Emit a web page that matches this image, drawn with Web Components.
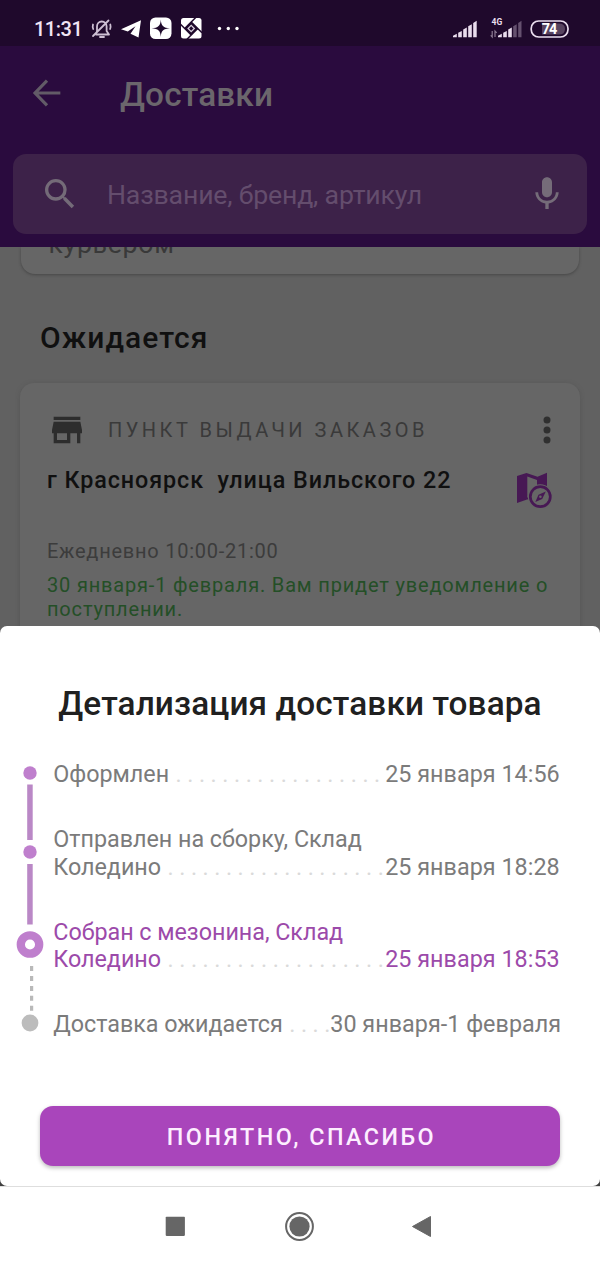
<!DOCTYPE html>
<html lang="ru">
<head>
<meta charset="utf-8">
<title>Доставки</title>
<style>
html,body{margin:0;padding:0}
body{width:600px;height:1265px;overflow:hidden;background:#616161;font-family:Roboto,"Noto Sans",sans-serif;color:#0c0c0c}
</style>
</head>
<body>
<app-screen></app-screen>
<script>
const define = (name, html) => {
  const tpl = document.createElement('template');
  tpl.innerHTML = html;
  customElements.define(name, class extends HTMLElement {
    constructor() {
      super();
      this.attachShadow({ mode: 'open' }).appendChild(tpl.content.cloneNode(true));
    }
  });
};

define('status-bar', `<style>
:host{display:flex;box-sizing:border-box;height:46px;background:#1f092c;color:#f0e4f4;padding:0 0 0 34px}
.time{width:57px;font:500 20px/58px Roboto,sans-serif;letter-spacing:-.5px}
svg{display:block;height:46px}
</style>
<span class="time">11:31</span>
<svg width="509" viewBox="91 0 509 46">
  <g fill="none" stroke="#cdbfd3" stroke-width="1.8" stroke-linecap="round" stroke-linejoin="round">
    <path d="M96 34.500H109L106.600 31V26.500C106.600 23.500 104.500 21.500 101.800 21.500S97 23.500 97 26.500V31ZM93 36L108.500 20.500M100 37H104M93 24.500Q92.300 27 93.200 29M110.300 24.500Q111 27 110.100 29"/>
  </g>
  <path fill="#fff" d="M121 29.300L141 20.300L138.500 37.500L130.500 33.800L135.500 26.300L127.800 31.500Z"/>
  <rect x="150" y="17.500" width="21.500" height="21.500" rx="5.500" fill="#fff"/>
  <path fill="#1f092c" d="M160.800 19.500C161.200 25.800 163.200 27.900 170 28.300C163.200 28.700 161.200 30.700 160.800 37C160.400 30.700 158.400 28.700 151.600 28.300C158.400 27.900 160.400 25.800 160.800 19.500Z"/>
  <rect x="181" y="18" width="20.500" height="20.500" rx="2.500" fill="#fff"/>
  <path fill="#1f092c" d="M191.200 22L197.700 28.500L191.200 35L184.700 28.500Z"/>
  <path fill="none" stroke="#1f092c" stroke-width="1.500" d="M184.700 28.500L195.700 17.500M191.200 22L202 32.800M197.700 28.500L187 39.200M191.200 35L180.500 24.300"/>
  <path fill="none" stroke="#d9d0de" stroke-width="1.300" d="M191.200 25.400L194.300 28.500L191.200 31.600L188.100 28.500Z"/>
  <g fill="#fff"><circle cx="219.500" cy="28.500" r="1.700"/><circle cx="228.300" cy="28.500" r="1.700"/><circle cx="237" cy="28.500" r="1.700"/></g>
  <g fill="#eadeee"><path d="M453 37.300V35.800L456.800 33.800V37.300ZM458.200 32.700L461.800 31V37.300H458.200ZM463.200 29.400L466.800 27.500V37.300H463.200ZM468.200 26.200L471.800 24.300V37.300H468.200ZM473.200 22.900L476.700 20.800V37.300H473.200Z"/>
  <path d="M498 37.300V35.800L501.800 33.800V37.300ZM503.200 32.700L506.800 31V37.300H503.200ZM508.200 29.400L511.800 27.500V37.300H508.200Z"/></g>
  <path fill="#65516f" d="M513.200 26.200L516.700 24.300V37.300H513.200ZM518.200 22.900L521.500 20.800V37.300H518.200Z"/>
  <path fill="none" stroke="#8b7a93" stroke-width="1.200" d="M492.200 31V37L490.700 35.300M495 37V31L496.700 32.800"/>
  <text x="491.500" y="25" font-family="Roboto,sans-serif" font-weight="700" font-size="8.500" fill="#eadeee">4G</text>
  <rect x="531.200" y="21" width="36.800" height="16" rx="7.500" fill="#1f092c" stroke="#eadeee" stroke-width="1.700"/>
  <path d="M542 23.500H559Q565 23.500 565 29Q565 34.500 559 34.500H542Z" fill="#57435f"/>
  <text x="541.700" y="34" font-family="Roboto,sans-serif" font-weight="700" font-size="14.500" fill="#fff" letter-spacing="-1">74</text>
</svg>`);

define('search-field', `<style>
:host{display:flex;align-items:center;box-sizing:border-box;width:574px;height:80px;border-radius:13px;background:#3d2249;padding:0 22px 0 27px}
.icon{display:block;flex:none;width:40px;height:40px}
.hint{flex:1;margin-left:27px;padding-top:2px;font-size:26.67px;line-height:78px;color:#644d6d;letter-spacing:-.17px;white-space:nowrap}
.mic{margin-right:-2px}
</style>
<svg class="icon" viewBox="0 0 24 24"><path fill="#746b78" d="M15.500 14h-.79l-.28-.27A6.470 6.470 0 0 0 16 9.500 6.500 6.500 0 1 0 9.500 16c1.610 0 3.090-.59 4.230-1.570l.27.28v.79l5 4.990L20.490 19l-4.990-5zm-6 0C7.010 14 5 11.990 5 9.500S7.010 5 9.500 5 14 7.010 14 9.500 11.990 14 9.500 14z"/></svg>
<span class="hint"><slot></slot></span>
<svg class="icon mic" viewBox="0 0 24 24"><path fill="#756c79" d="M12 14c1.660 0 3-1.340 3-3V5c0-1.660-1.340-3-3-3S9 3.340 9 5v6c0 1.660 1.340 3 3 3zm5.300-3c0 3-2.540 5.100-5.300 5.100S6.700 14 6.700 11H5c0 3.410 2.720 6.230 6 6.720V21h2v-3.280c3.280-.48 6-3.300 6-6.720h-1.700z"/></svg>`);

define('app-header', `<style>
:host{display:block;box-sizing:border-box;height:201px;background:#2a0b3e;padding:28px 13px 0}
.bar{display:flex;align-items:center;height:40px;margin-bottom:40px;padding-left:14px}
svg{display:block;width:40px;height:40px;margin-top:-3px}
h1{margin:2px 0 0 53px;font:500 33.330px/40px Roboto,sans-serif;letter-spacing:.15px;color:#6b666c}
</style>
<div class="bar"><svg viewBox="0 0 24 24"><path fill="none" stroke="#625b67" stroke-width="1.900" d="M20 12H5.200M12 4.600L4.800 12L12 19.400"/></svg><h1><slot name="title"></slot></h1></div>
<search-field><slot name="hint"></slot></search-field>`);

define('pickup-card', `<style>
:host{display:block;box-sizing:border-box;width:560px;height:260px;margin:0 20px;border-radius:14px 14px 0 0;background:#666;box-shadow:0 1px 4px #4b4b4b80;padding:27px 27px 0}
.top,.place{display:flex}
.top{height:40px}
.store{width:40px;height:40px;flex:none}
.cat{flex:1;margin-left:21px;font-size:20px;line-height:40.500px;letter-spacing:3.500px;color:#3a3a3a;white-space:nowrap}
.more{width:12px;height:40px;margin-right:.5px}
.place{height:74px;padding-top:2px}
.addr{flex:1;font-weight:500;font-size:23.330px;line-height:56px;letter-spacing:.920px;white-space:pre;color:#101010}
.map{width:38px;height:38px;margin:18.500px 0 0 0}
.hours{font-size:20px;line-height:26px;letter-spacing:.75px;color:#3c3c3c;margin-top:12px}
.note{font-size:20px;line-height:23.500px;letter-spacing:.820px;color:#244f27;margin-top:10px;white-space:nowrap}
</style>
<div class="top"><svg class="store" viewBox="0 0 24 24"><path fill="#2d2d2d" d="M20 4H4v2h16V4zm1 10v-2l-1-5H4l-1 5v2h1v6h10v-6h4v6h2v-6h1zm-9 4H6v-4h6v4z"/></svg><span class="cat"><slot name="category"></slot></span><svg class="more" viewBox="0 0 12 40"><g fill="#303030"><circle cx="6" cy="10" r="3.500"/><circle cx="6" cy="20" r="3.500"/><circle cx="6" cy="30" r="3.500"/></g></svg></div>
<div class="place"><span class="addr"><slot name="address"></slot></span>
<svg class="map" viewBox="0 0 38 38"><path fill="#471854" d="M2 5L11.500 2L22.500 5.700L32 1.700V30L23 27L12 28.500L2 32Z"/><path fill="#666" d="M12.300 5.500L22 9V27L12.300 26.500Z"/><circle cx="25.300" cy="25.700" r="12.500" fill="#666"/><circle cx="25.300" cy="25.700" r="10" fill="none" stroke="#471854" stroke-width="2.700"/><path fill="#471854" d="M30.800 20.500L27.200 28L20.300 31L23.500 23.700Z"/><circle cx="25.400" cy="25.800" r="1.300" fill="#666"/></svg></div>
<div class="hours"><slot name="hours"></slot></div>
<div class="note"><slot name="note"></slot></div>`);

define('delivery-list', `<style>
:host{display:block;height:379px;overflow:hidden;background:#616161}
.prev{box-sizing:border-box;height:27px;margin:0 21px;border-radius:0 0 14px 14px;background:#666;box-shadow:0 1px 3px #474747;overflow:hidden;padding-left:27.500px;font-size:26.670px;letter-spacing:.7px;color:#393939;line-height:30px}
.prev span{display:block;margin-top:-18px}
h2{margin:44px 40px 25px;font:500 30px/40px Roboto,sans-serif;letter-spacing:1.050px;color:#101010}
</style>
<div class="prev"><span>курьером</span></div>
<h2>Ожидается</h2>
<pickup-card><span slot="category">ПУНКТ ВЫДАЧИ ЗАКАЗОВ</span><span slot="address">г Красноярск  улица Вильского 22</span><span slot="hours">Ежедневно 10:00-21:00</span><span slot="note">30 января-1 февраля. Вам придет уведомление о<br>поступлении.</span></pickup-card>`);

define('timeline-step', `<style>
:host{display:flex;align-items:flex-end;justify-content:space-between;font-size:23.330px;line-height:27.500px;letter-spacing:-.03px;color:#7b7b7b;white-space:nowrap}
:host([current]){color:#9c4aaa}
.dots{color:#dadada;margin-left:6.500px;letter-spacing:-.13px}
.date{letter-spacing:.03px}
</style>
<span><slot></slot><span class="dots"><slot name="leader"></slot></span></span><span class="date"><slot name="date"></slot></span>`);

define('delivery-timeline', `<style>
:host{display:grid;grid-template-columns:53.300px 506.400px;height:289px;padding-top:1px}
svg{display:block;width:54px;height:290px;margin-top:-1px}
.steps{display:flex;flex-direction:column;gap:37.500px}
</style>
<svg viewBox="0 760 54 290"><g fill="#bf7fcd"><circle cx="30" cy="773" r="6.700"/><circle cx="30" cy="852" r="6.700"/></g>
<path fill="#ba88c6" d="M27.200 784.500H32.700V840H27.200ZM27.200 864H32.700V924.500H27.200Z"/>
<circle cx="30" cy="944.500" r="9.200" fill="none" stroke="#bf7fcd" stroke-width="8.300"/>
<path stroke="#b9b9b9" stroke-width="3.200" stroke-dasharray="5 4.950" d="M31.600 966V1011"/>
<circle cx="30" cy="1023" r="8.400" fill="#bcbcbc"/></svg>
<div class="steps">
<timeline-step>Оформлен<span slot="leader">. . . . . . . . . . . . . . . . . .</span><span slot="date">25 января 14:56</span></timeline-step>
<timeline-step>Отправлен на сборку, Склад<br>Коледино<span slot="leader">. . . . . . . . . . . . . . . . . . .</span><span slot="date">25 января 18:28</span></timeline-step>
<timeline-step current>Собран с мезонина, Склад<br>Коледино<span slot="leader">. . . . . . . . . . . . . . . . . . .</span><span slot="date">25 января 18:53</span></timeline-step>
<timeline-step>Доставка ожидается<span slot="leader">. . . .</span><span slot="date">30 января-1 февраля</span></timeline-step>
</div>`);

define('primary-button', `<style>
:host{display:block}
button{display:block;width:520px;height:60px;margin:0;border:0;border-radius:13px;background:#a945bb;color:#fdeeff;font:500 23.330px/60px Roboto,sans-serif;letter-spacing:2.500px;padding:1px 0 0 3px;box-shadow:0 2px 4px #0004}
</style>
<button><slot></slot></button>`);

define('bottom-sheet', `<style>
:host{display:block;height:560px}
.panel{box-sizing:border-box;height:560px;border-radius:7px;background:#fff;padding-top:57.500px}
h2{margin:0 0 36.500px;text-align:center;font:500 33.330px/40px Roboto,sans-serif;letter-spacing:.12px;color:#202020}
primary-button{margin:56px 40px 0}
</style>
<div class="panel"><h2>Детализация доставки товара</h2><delivery-timeline></delivery-timeline><primary-button>ПОНЯТНО, СПАСИБО</primary-button></div>`);

define('nav-bar', `<style>
:host{display:block;height:78px;border-top:1px solid #dedede;background:#fff}
svg{display:block}
</style>
<svg width="600" height="78" viewBox="0 1187 600 78"><g fill="#666"><rect x="165.700" y="1216.700" width="19.200" height="19.200" rx=".8"/><circle cx="299.500" cy="1226.500" r="10.100"/><circle cx="299.500" cy="1226.500" r="13.400" fill="none" stroke="#666" stroke-width="2"/><path stroke="#666" stroke-linejoin="round" d="M412.500 1226.500L430.500 1216.500V1236.500Z"/></g></svg>`);

define('app-screen', `<style>
:host{display:flex;flex-direction:column;width:600px;height:1265px}
:host>*{flex:none}
bottom-sheet{background:linear-gradient(#616161 50%,#404040 50%)}
</style>
<status-bar></status-bar>
<app-header><span slot="title">Доставки</span><span slot="hint">Название, бренд, артикул</span></app-header>
<delivery-list></delivery-list>
<bottom-sheet></bottom-sheet>
<nav-bar></nav-bar>`);
</script>
</body>
</html>
